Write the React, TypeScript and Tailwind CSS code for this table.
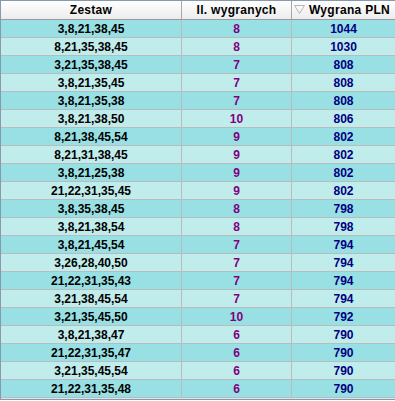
const rows: [string, number, number][] = [
  ['3,8,21,38,45', 8, 1044],
  ['8,21,35,38,45', 8, 1030],
  ['3,21,35,38,45', 7, 808],
  ['3,8,21,35,45', 7, 808],
  ['3,8,21,35,38', 7, 808],
  ['3,8,21,38,50', 10, 806],
  ['8,21,38,45,54', 9, 802],
  ['8,21,31,38,45', 9, 802],
  ['3,8,21,25,38', 9, 802],
  ['21,22,31,35,45', 9, 802],
  ['3,8,35,38,45', 8, 798],
  ['3,8,21,38,54', 8, 798],
  ['3,8,21,45,54', 7, 794],
  ['3,26,28,40,50', 7, 794],
  ['21,22,31,35,43', 7, 794],
  ['3,21,38,45,54', 7, 794],
  ['3,21,35,45,50', 10, 792],
  ['3,8,21,38,47', 6, 790],
  ['21,22,31,35,47', 6, 790],
  ['3,21,35,45,54', 6, 790],
  ['21,22,31,35,48', 6, 790],
];

const App = () => {
  return (
    <div className="w-[395px] h-[401px] bg-white font-['Liberation_Sans',Arial,sans-serif] text-[12px] font-bold overflow-hidden">
      <div className="border-l border-t border-[#8799ad]">
        {/* Header */}
        <div className="flex h-[19px] border-b border-[#9a9a9a] bg-gradient-to-b from-white to-[#ececec] text-black tracking-[0.3px]">
          <div className="w-[181px] border-r border-[#a8a8a8] flex items-center justify-center">Zestaw</div>
          <div className="w-[110px] border-r border-[#a8a8a8] flex items-center justify-center">Il. wygranych</div>
          <div className="relative flex-1 flex items-center justify-center pl-[12px]">
            <svg className="absolute left-[2px] top-[4px]" width="11" height="9" viewBox="0 0 11 9">
              <path d="M0.5 0.5 H10.5 L5.5 8.5 Z" fill="none" stroke="#b4b4b4" strokeWidth="1" />
            </svg>
            Wygrana PLN
          </div>
        </div>

        {/* Rows */}
        {rows.map(([set, count, win], idx) => (
          <div
            key={idx}
            className={`flex h-[18px] border-b border-[#b9bcbc] ${idx % 2 === 0 ? 'bg-[#98e0e4]' : 'bg-[#c1ecec]'}`}
          >
            <div className="w-[181px] border-r border-[#b9bcbc] flex items-center justify-center text-black">{set}</div>
            <div className="w-[110px] border-r border-[#b9bcbc] flex items-center justify-center text-[#800080]">{count}</div>
            <div className="flex-1 flex items-center justify-center text-[#000080]">{win}</div>
          </div>
        ))}
        <div className="h-[1px] bg-[#d6e8ee]" />
        <div className="h-[1px] bg-[#8799ad]" />
      </div>
    </div>
  );
};

export default App;
